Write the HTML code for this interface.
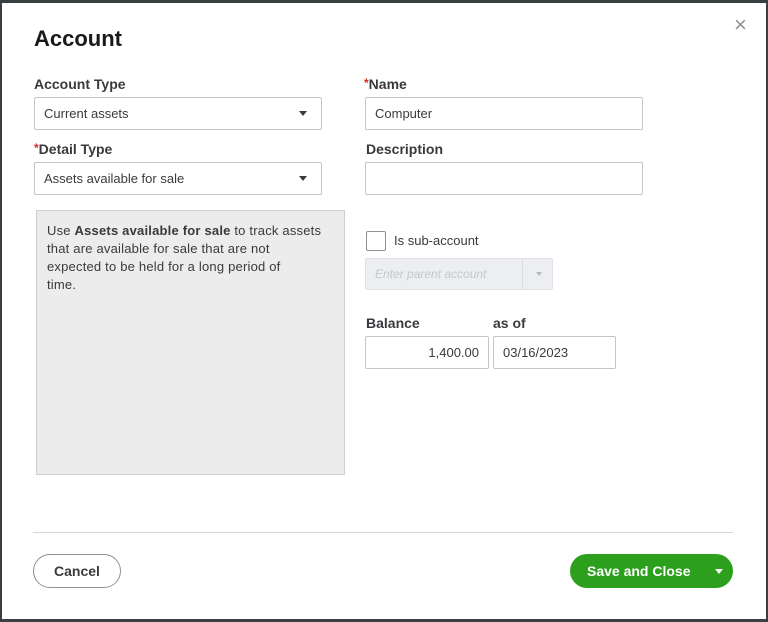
<!DOCTYPE html>
<html><head><style>
*{box-sizing:border-box;margin:0;padding:0}
body{width:768px;height:622px;background:#3a3f42;font-family:"Liberation Sans",sans-serif;color:#393a3d;position:relative;overflow:hidden}
.m{position:absolute;left:2px;top:3px;width:764px;height:616px;background:#fff}
.a{position:absolute}
.lb{font-size:14px;font-weight:bold;color:#393a3d}
.req{color:#d52b1e;font-size:12px;vertical-align:top}
.in{border:1px solid #c5c5c5;border-radius:2px;background:#fff;font-size:13px;color:#393a3d;padding-left:9px;display:flex;align-items:center}
.car{position:absolute;right:14px;top:13px;width:0;height:0;border-left:4px solid transparent;border-right:4px solid transparent;border-top:5px solid #393a3d}
</style></head><body>
<div class="m"></div>
<div class="a" style="left:34px;top:26px;font-size:22px;font-weight:bold;color:#1a1a1a">Account</div>
<div class="a" style="left:734px;top:12px;font-size:22px;color:#8d9096">×</div>

<div class="a lb" style="left:34px;top:76px">Account Type</div>
<div class="a in" style="left:34px;top:97px;width:288px;height:33px">Current assets<div class="car"></div></div>
<div class="a lb" style="left:34px;top:141px"><span class="req">*</span>Detail Type</div>
<div class="a in" style="left:34px;top:162px;width:288px;height:33px">Assets available for sale<div class="car"></div></div>
<div class="a" style="left:36px;top:210px;width:309px;height:265px;background:#ececec;border:1px solid #cfcfcf;padding:11px 10px;font-size:13px;line-height:18px;color:#393a3d;letter-spacing:0.2px;white-space:nowrap">Use <b>Assets available for sale</b> to track assets<br>that are available for sale that are not<br>expected to be held for a long period of<br>time.</div>

<div class="a lb" style="left:364px;top:76px"><span class="req">*</span>Name</div>
<div class="a in" style="left:365px;top:97px;width:278px;height:33px">Computer</div>
<div class="a lb" style="left:366px;top:141px">Description</div>
<div class="a in" style="left:365px;top:162px;width:278px;height:33px"></div>
<div class="a" style="left:366px;top:231px;width:20px;height:20px;border:1px solid #8d9096;border-radius:2px"></div>
<div class="a" style="left:394px;top:233px;font-size:13px">Is sub-account</div>
<div class="a" style="left:365px;top:258px;width:188px;height:32px;background:#eceef1;border:1px solid #e0e2e5;border-radius:2px;font-size:12px;font-style:italic;color:#c5c7ca;padding:8px 9px">Enter parent account<div style="position:absolute;left:156px;top:0;width:1px;height:30px;background:#dcdee1"></div><div style="position:absolute;left:170px;top:13px;border-left:3px solid transparent;border-right:3px solid transparent;border-top:4px solid #b5b7ba"></div></div>
<div class="a lb" style="left:366px;top:315px">Balance</div>
<div class="a lb" style="left:493px;top:315px">as of</div>
<div class="a in" style="left:365px;top:336px;width:124px;height:33px;justify-content:flex-end;padding-right:9px">1,400.00</div>
<div class="a in" style="left:493px;top:336px;width:123px;height:33px">03/16/2023</div>

<div class="a" style="left:33px;top:532px;width:700px;height:1px;background:#d4d7dc"></div>
<div class="a" style="left:33px;top:554px;width:88px;height:34px;border:1px solid #8d9096;border-radius:17px;display:flex;align-items:center;justify-content:center;font-size:14px;font-weight:bold">Cancel</div>
<div class="a" style="left:570px;top:554px;width:163px;height:34px;background:#2ca01c;border-radius:17px;color:#fff;font-size:14px;font-weight:bold;padding:9px 0 0 17px">Save and Close<div style="position:absolute;left:145px;top:15px;border-left:4px solid transparent;border-right:4px solid transparent;border-top:5px solid #fff"></div></div>
</body></html>
